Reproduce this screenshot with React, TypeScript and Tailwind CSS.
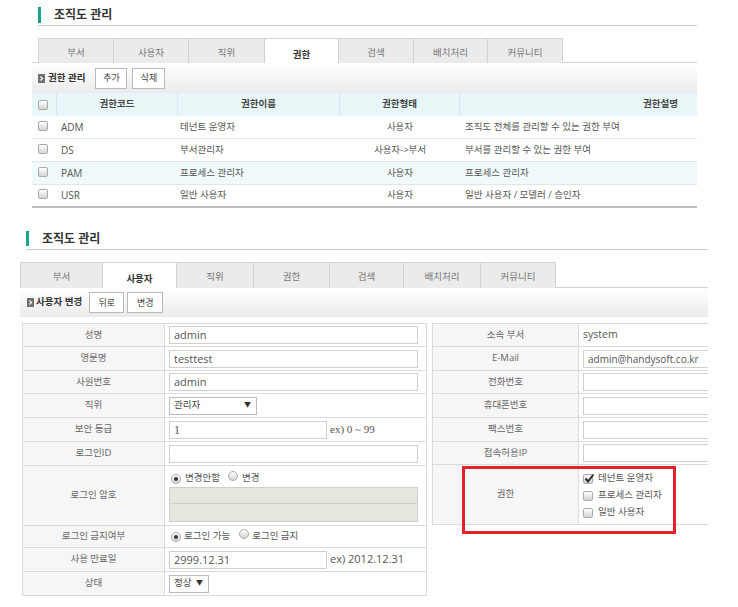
import React from "react";

const tabNames = ["부서", "사용자", "직위", "권한", "검색", "배치처리", "커뮤니티"];

function Check({ on = false }: { on?: boolean }) {
  return (
    <span className="relative inline-block size-[10px] shrink-0 rounded-[2px] border border-[#a9a9a9] bg-linear-to-b from-white to-[#d4d4d4]">
      {on && (
        <svg className="absolute left-[0px] top-[-2px]" width="11" height="11" viewBox="0 0 11 11">
          <path d="M1.5 5.5 L4 8.5 L9.5 1.5" stroke="#2b2b2b" strokeWidth="2" fill="none" />
        </svg>
      )}
    </span>
  );
}

function Radio({ on = false }: { on?: boolean }) {
  return (
    <span className="relative inline-flex size-[10px] shrink-0 items-center justify-center rounded-full border border-[#a9a9a9] bg-linear-to-b from-white to-[#d4d4d4]">
      {on && <span className="size-[4px] rounded-full bg-[#333]" />}
    </span>
  );
}

function BulletIcon() {
  return (
    <svg width="7" height="9" viewBox="0 0 7 9" className="shrink-0">
      <rect x="0" y="0" width="7" height="9" fill="#707070" />
      <path d="M2.5 2.5 L4.5 4.5 L2.5 6.5" stroke="#fff" strokeWidth="1.2" fill="none" />
    </svg>
  );
}

function Btn({ w, children }: { w: string; children: React.ReactNode }) {
  return (
    <span className={`flex h-[21px] items-center justify-center border border-[#b9b9b9] bg-white text-[9px] text-[#444] ${w}`}>
      {children}
    </span>
  );
}

function Title({ bar }: { bar: string }) {
  return (
    <div className="ml-[6px] flex h-[19px] items-start border-b border-[#c9c9c9]">
      <span className={`w-[3px] bg-[#16a78b] ${bar}`} />
      <span className="ml-[13px] text-[12px] font-bold leading-[16px] text-[#333]">조직도 관리</span>
    </div>
  );
}

function Tabs({ active, widths, h, pl }: { active: number; widths: string[]; h: string; pl: string }) {
  return (
    <div className={`flex border-b border-[#cfcfcf] ${pl}`}>
      {tabNames.map((t, i) => (
        <div
          key={t}
          className={`-ml-px -mb-px flex justify-center border border-b-0 border-[#d2d2d2] text-[9.5px] first:ml-0 ${h} ${widths[i]} ${
            i === active ? "bg-white pt-[9px] font-bold text-[#333]" : "bg-[#ebebeb] pt-[7px] text-[#777]"
          }`}
        >
          {t}
        </div>
      ))}
    </div>
  );
}

const rows = [
  { code: "ADM", name: "테넌트 운영자", type: "사용자", desc: "조직도 전체를 관리할 수 있는 권한 부여", hl: false },
  { code: "DS", name: "부서관리자", type: "사용자->부서", desc: "부서를 관리할 수 있는 권한 부여", hl: false },
  { code: "PAM", name: "프로세스 관리자", type: "사용자", desc: "프로세스 관리자", hl: true },
  { code: "USR", name: "일반 사용자", type: "사용자", desc: "일반 사용자 / 모델러 / 승인자", hl: false },
];

function RoleTable() {
  return (
    <div className="text-[9.5px] text-[#555]">
      <div className="grid h-[23px] grid-cols-[25px_121px_162px_120px_1fr] bg-[#e8f6f8] font-bold text-[#444]">
        <div className="flex items-center border-r border-[#d3e9ee] pl-[6px]">
          <Check />
        </div>
        <div className="flex items-center justify-center border-r border-[#d3e9ee]">권한코드</div>
        <div className="flex items-center justify-center border-r border-[#d3e9ee]">권한이름</div>
        <div className="flex items-center justify-center border-r border-[#d3e9ee]">권한형태</div>
        <div className="flex items-center justify-end pr-[19px]">권한설명</div>
      </div>
      {rows.map((r, i) => (
        <div
          key={r.code}
          className={`grid h-[23px] grid-cols-[25px_121px_162px_120px_1fr] ${
            i === rows.length - 1 ? "border-b-2 border-[#bdbdbd]" : "border-b border-[#e4e4e4]"
          } ${r.hl ? "bg-[#f0fafb]" : "bg-white"}`}
        >
          <div className="flex items-center pl-[6px] pb-[3px]">
            <Check />
          </div>
          <div className="flex items-center pl-[4px] text-[10px]">{r.code}</div>
          <div className="flex items-center pl-[2px]">{r.name}</div>
          <div className="flex items-center justify-center">{r.type}</div>
          <div className="flex items-center pl-[5px]">{r.desc}</div>
        </div>
      ))}
    </div>
  );
}

function Field({ h, label, children }: { h: string; label: string; children?: React.ReactNode }) {
  return (
    <div className={`flex border-b border-[#dadada] ${h}`}>
      <div className="flex w-[142px] shrink-0 items-center justify-center border-r border-[#dadada] bg-[#f6f6f6] text-[9.5px] text-[#666]">
        {label}
      </div>
      <div className="flex min-w-0 flex-1 items-center px-[4px]">{children}</div>
    </div>
  );
}

function RField({ h, label, children }: { h: string; label: string; children?: React.ReactNode }) {
  return (
    <div className={`flex border-b border-[#dadada] ${h}`}>
      <div className="flex w-[146px] shrink-0 items-center justify-center border-r border-[#dadada] bg-[#f6f6f6] text-[9.5px] text-[#666]">
        {label}
      </div>
      <div className="flex min-w-0 flex-1 items-center px-[4px]">{children}</div>
    </div>
  );
}

function Box({ w, children, serif = false, small = false }: { w: string; children?: React.ReactNode; serif?: boolean; small?: boolean }) {
  return (
    <div
      className={`h-[18px] shrink-0 whitespace-nowrap border border-[#cfcfcf] bg-white px-[4px] leading-[16px] text-[#555] ${w} ${
        serif ? "font-['Liberation_Serif',serif] text-[12px]" : small ? "text-[10px]" : "text-[11px]"
      }`}
    >
      {children}
    </div>
  );
}

function Select({ w, label }: { w: string; label: string }) {
  return (
    <div className={`flex h-[18px] items-center justify-between border border-[#bcbcbc] bg-white pl-[4px] pr-[5px] text-[9.5px] text-[#444] ${w}`}>
      <span>{label}</span>
      <span className="text-[7px] text-[#333]">▼</span>
    </div>
  );
}

function LeftForm() {
  return (
    <div className="w-[405px] shrink-0 border-l border-r border-t border-[#dadada]">
      <Field h="h-[23px]" label="성명">
        <Box w="w-[249px]">admin</Box>
      </Field>
      <Field h="h-[24px]" label="영문명">
        <Box w="w-[249px]">testtest</Box>
      </Field>
      <Field h="h-[23px]" label="사원번호">
        <Box w="w-[249px]">admin</Box>
      </Field>
      <Field h="h-[24px]" label="직위">
        <Select w="w-[88px]" label="관리자" />
      </Field>
      <Field h="h-[24px]" label="보안 등급">
        <Box w="w-[158px]" serif>
          1
        </Box>
        <span className="ml-[3px] font-['Liberation_Serif',serif] text-[11px] text-[#555]">ex) 0 ~ 99</span>
      </Field>
      <Field h="h-[24px]" label="로그인ID">
        <Box w="w-[249px]" />
      </Field>
      <div className="flex h-[60px] border-b border-[#dadada]">
        <div className="flex w-[142px] shrink-0 items-center justify-center border-r border-[#dadada] bg-[#f6f6f6] text-[9.5px] text-[#666]">
          로그인 암호
        </div>
        <div className="flex flex-1 flex-col px-[4px] pt-[5px]">
          <div className="flex h-[14px] items-center text-[9.5px] text-[#555]">
            <span className="ml-[2px]">
              <Radio on />
            </span>
            <span className="ml-[4px]">변경안함</span>
            <span className="ml-[8px]">
              <Radio />
            </span>
            <span className="ml-[4px]">변경</span>
          </div>
          <div className="mt-[2px] h-[17px] w-[249px] border border-[#cfcfcf] bg-[#e6e6de]" />
          <div className="h-[18px] w-[249px] border border-t-0 border-[#cfcfcf] bg-[#e6e6de]" />
        </div>
      </div>
      <Field h="h-[22px]" label="로그인 금지여부">
        <div className="flex items-center text-[9.5px] text-[#555]">
          <span className="ml-[2px]">
            <Radio on />
          </span>
          <span className="ml-[3px]">로그인 가능</span>
          <span className="ml-[9px]">
            <Radio />
          </span>
          <span className="ml-[3px]">로그인 금지</span>
        </div>
      </Field>
      <Field h="h-[24px]" label="사용 만료일">
        <Box w="w-[158px]">2999.12.31</Box>
        <span className="ml-[3px] text-[11px] text-[#555]">ex) 2012.12.31</span>
      </Field>
      <Field h="h-[24px]" label="상태">
        <Select w="w-[40px]" label="정상" />
      </Field>
    </div>
  );
}

function RightForm() {
  return (
    <div className="w-[310px] shrink-0 border-l border-t border-[#dadada]">
      <RField h="h-[23px]" label="소속 부서">
        <span className="text-[10.5px] text-[#555]">system</span>
      </RField>
      <RField h="h-[24px]" label="E-Mail">
        <Box w="w-[160px]" small>
          admin@handysoft.co.kr
        </Box>
      </RField>
      <RField h="h-[23px]" label="전화번호">
        <Box w="w-[160px]" />
      </RField>
      <RField h="h-[24px]" label="휴대폰번호">
        <Box w="w-[160px]" />
      </RField>
      <RField h="h-[24px]" label="팩스번호">
        <Box w="w-[160px]" />
      </RField>
      <RField h="h-[23px]" label="접속허용IP">
        <Box w="w-[160px]" />
      </RField>
      <div className="flex h-[60px] border-b border-[#dadada]">
        <div className="flex w-[146px] shrink-0 items-center justify-center border-r border-[#dadada] bg-[#f6f6f6] text-[9.5px] text-[#666]">
          권한
        </div>
        <div className="flex flex-1 flex-col px-[4px] pt-[5px] text-[9.5px] text-[#555]">
          {[
            { t: "테넌트 운영자", on: true },
            { t: "프로세스 관리자", on: false },
            { t: "일반 사용자", on: false },
          ].map((c) => (
            <div key={c.t} className="flex h-[17px] items-center gap-[5px]">
              <Check on={c.on} />
              <span>{c.t}</span>
            </div>
          ))}
        </div>
      </div>
    </div>
  );
}

export default function App() {
  return (
    <div className="relative h-[607px] w-[738px] overflow-hidden bg-white font-['Open_Sans','Noto_Sans_CJK_KR',sans-serif]">
      <section className="ml-[32px] w-[665px] pt-[7px]">
        <Title bar="h-[16px]" />
        <div className="mt-[12px]">
          <Tabs
            active={3}
            h="h-[25px]"
            pl="pl-[6px]"
            widths={["w-[76px]", "w-[76px]", "w-[77px]", "w-[75px]", "w-[76px]", "w-[75px]", "w-[76px]"]}
          />
        </div>
        <div className="flex h-[30px] items-center bg-linear-to-b from-white to-[#ebebeb] pl-[6px]">
          <BulletIcon />
          <span className="ml-[3px] text-[9.5px] font-bold text-[#333]">권한 관리</span>
          <span className="ml-[10px]">
            <Btn w="w-[32px]">추가</Btn>
          </span>
          <span className="ml-[5px]">
            <Btn w="w-[33px]">삭제</Btn>
          </span>
        </div>
        <RoleTable />
      </section>

      <section className="ml-[20px] mt-[23px] w-[688px] overflow-hidden">
        <Title bar="h-[15px]" />
        <div className="mt-[12px]">
          <Tabs
            active={1}
            h="h-[26px]"
            pl="pl-0"
            widths={["w-[83px]", "w-[75px]", "w-[78px]", "w-[77px]", "w-[75px]", "w-[78px]", "w-[76px]"]}
          />
        </div>
        <div className="flex h-[29px] items-center bg-linear-to-b from-white to-[#ebebeb] pl-[7px]">
          <BulletIcon />
          <span className="ml-[2px] text-[9.5px] font-bold text-[#333]">사용자 변경</span>
          <span className="ml-[7px]">
            <Btn w="w-[35px]">뒤로</Btn>
          </span>
          <span className="ml-[3px]">
            <Btn w="w-[36px]">변경</Btn>
          </span>
        </div>
        <div className="ml-[2px] mt-[6px] flex items-start gap-[5px]">
          <LeftForm />
          <RightForm />
        </div>
      </section>

      <div className="absolute left-[462px] top-[466px] h-[68px] w-[214px] border-[3px] border-[#e4202a]" />
    </div>
  );
}
